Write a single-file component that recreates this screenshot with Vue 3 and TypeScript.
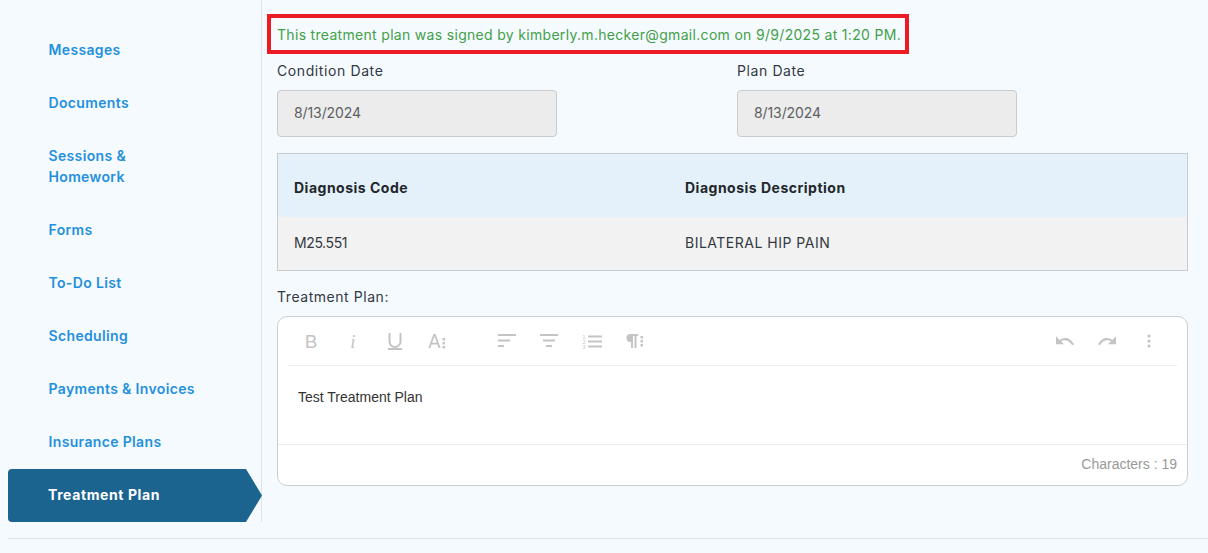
<script setup lang="ts">
const navItems: string[] = ['Messages', 'Documents', 'Sessions & Homework', 'Forms', 'To-Do List', 'Scheduling', 'Payments & Invoices', 'Insurance Plans'];
</script>

<template>
  <div class="page">
    <div class="main">
      <nav class="sidebar">
        <a v-for="item in navItems" :key="item" class="nav-item">{{ item }}</a>
        <a class="nav-item active">Treatment Plan</a>
      </nav>
      <section class="content">
        <div class="signed"><span>This treatment plan was signed by kimberly.m.hecker@gmail.com on 9/9/2025 at 1:20 PM.</span></div>
        <div class="dates">
          <div class="field">
            <label>Condition Date</label>
            <div class="date-input">8/13/2024</div>
          </div>
          <div class="field">
            <label>Plan Date</label>
            <div class="date-input">8/13/2024</div>
          </div>
        </div>
        <div class="table">
          <div class="row head">
            <div class="c1">Diagnosis Code</div>
            <div class="c2">Diagnosis Description</div>
          </div>
          <div class="row body">
            <div class="c1">M25.551</div>
            <div class="c2">BILATERAL HIP PAIN</div>
          </div>
        </div>
        <div class="plan-label">Treatment Plan:</div>
        <div class="editor">
          <div class="toolbar">
            <div class="tools">
              <span class="glyph b">B</span>
              <span class="glyph i">i</span>
              <svg width="18" height="20" viewBox="0 0 18 20"><path d="M3.5 2v8.5a5.5 5.5 0 0 0 11 0V2" fill="none" stroke="#c4c4c4" stroke-width="2"/><rect x="2" y="17" width="14" height="2" fill="#c4c4c4"/></svg>
              <svg width="18" height="18" viewBox="0 0 18 18" fill="#c4c4c4"><path d="M5.400 2h2.200l5 14h-2l-1.200-3.500H3.600L2.400 16H.4zM4.200 10.700h4.600L6.500 4.200z"/><rect x="14.500" y="6" width="2.500" height="2.500"/><rect x="14.500" y="10" width="2.500" height="2.500"/><rect x="14.500" y="14" width="2.500" height="2.500"/></svg>
            </div>
            <div class="tools second">
              <svg width="18" height="14" viewBox="0 0 18 14" fill="#c4c4c4"><rect width="18" height="2"/><rect y="5.500" width="12" height="2"/><rect y="11" width="6" height="2"/></svg>
              <svg width="18" height="14" viewBox="0 0 18 14" fill="#c4c4c4"><rect width="18" height="2"/><rect x="3" y="5.500" width="12" height="2"/><rect x="6" y="11" width="6" height="2"/></svg>
              <svg width="20" height="15" viewBox="0 0 20 15" fill="#c4c4c4"><rect x="6" y="1.500" width="14" height="2"/><rect x="6" y="6.500" width="14" height="2"/><rect x="6" y="11.500" width="14" height="2"/><text x="0.500" y="4.500" font-size="5.500" font-family="Liberation Sans">1</text><text x="0.500" y="9.500" font-size="5.500" font-family="Liberation Sans">2</text><text x="0.500" y="14.500" font-size="5.500" font-family="Liberation Sans">3</text></svg>
              <svg width="18" height="14" viewBox="0 0 18 14" fill="#c4c4c4"><path d="M4 0h8v2h-1.500v12h-2V2H7v12H5V8A4 4 0 0 1 4 0z"/><rect x="14.500" y="2" width="2.500" height="2.500"/><rect x="14.500" y="6" width="2.500" height="2.500"/><rect x="14.500" y="10" width="2.500" height="2.500"/></svg>
            </div>
            <div class="tools end">
              <svg width="18" height="10" viewBox="0 0 19 10" fill="#c4c4c4"><path d="M0 0v8.500h8.500L5.300 5.300C7.800 3.500 13 3 17.200 9.500l1.800-1C14.500.5 8 .5 3.900 3.900z"/></svg>
              <svg width="18" height="10" viewBox="0 0 19 10" fill="#c4c4c4"><path d="M19 0v8.500h-8.500l3.200-3.200C11.200 3.500 6 3 1.800 9.500L0 8.500C4.500.5 11 .5 15.100 3.900z"/></svg>
              <svg class="dots" width="4" height="14" viewBox="0 0 4 14" fill="#c4c4c4"><circle cx="2" cy="2" r="1.600"/><circle cx="2" cy="7" r="1.600"/><circle cx="2" cy="12" r="1.600"/></svg>
            </div>
          </div>
          <div class="editor-body">Test Treatment Plan</div>
          <div class="editor-foot">Characters : 19</div>
        </div>
      </section>
    </div>
    <hr class="rule" />
  </div>
</template>

<style scoped>
.page { width: 1208px; height: 553px; background: #f5faff; font-family: Inter, "Open Sans", sans-serif; overflow: hidden; box-sizing: border-box; padding: 0 0 0 8px; }
.main { display: flex; height: 522px; }
.sidebar { width: 254px; box-sizing: border-box; border-right: 1px solid #dfe3e8; padding-top: 24px; display: flex; flex-direction: column; flex-shrink: 0; }
.nav-item { display: flex; align-items: center; min-height: 53px; padding: 0 20px 2px 40.500px; box-sizing: border-box; font-size: 14px; font-weight: 600; line-height: 21px; letter-spacing: .35px; color: #2490dc; }
.nav-item:nth-child(3) { min-height: 74px; padding-right: 110px; }
.nav-item.active { width: 254px; height: 53px; padding-left: 40px; color: #fff; background: #1b6490; font-weight: 700; letter-spacing: .6px; border-radius: 4px 0 0 4px; clip-path: polygon(0 0, 238px 0, 254px 50%, 238px 100%, 0 100%); }
.content { flex: 1; padding: 14px 20px 0 15px; min-width: 0; }
.signed { width: 642px; height: 40px; margin-left: -10px; box-sizing: border-box; border: 4px solid #ed1c24; display: flex; align-items: center; padding-left: 6px; font-size: 14px; letter-spacing: .31px; color: #43a047; white-space: nowrap; }
.dates { display: flex; gap: 180px; margin-top: 7px; }
.field { width: 280px; }
.field label { display: block; font-size: 14px; letter-spacing: .6px; line-height: 20px; color: #33393f; }
.date-input { margin-top: 9px; height: 47px; box-sizing: border-box; border: 1px solid #c9cbcd; border-radius: 4px; background: #ececec; display: flex; align-items: center; padding: 0 0 3px 16px; font-size: 14px; letter-spacing: -.1px; color: #5b5f63; }
.table { margin-top: 16px; border: 1px solid #c8cbce; width: 911px; box-sizing: border-box; font-size: 14px; letter-spacing: .5px; }
.row { display: flex; align-items: center; }
.row .c1 { width: 407px; padding-left: 16px; box-sizing: border-box; }
.head { height: 63px; padding-top: 3px; box-sizing: border-box; background: #e4f1fa; font-weight: 700; color: #23272b; }
.body { height: 53px; padding-bottom: 2px; box-sizing: border-box; background: #f2f2f2; color: #33393f; }
.body .c1 { letter-spacing: -.4px; }
.plan-label { margin-top: 16px; font-size: 14px; letter-spacing: .55px; line-height: 20px; color: #33393f; }
.editor { margin-top: 9px; width: 911px; height: 170px; box-sizing: border-box; border: 1px solid #c9ced3; border-radius: 10px; background: #fff; display: flex; flex-direction: column; font-family: "Liberation Sans", Arial, sans-serif; }
.toolbar { height: 48px; margin: 0 10px; border-bottom: 1px solid #ececec; display: flex; align-items: center; padding: 0 14px; flex-shrink: 0; }
.tools { display: flex; align-items: center; gap: 24px; }
.tools.second { margin-left: 52px; }
.tools.end { margin-left: auto; padding-right: 12px; }
.dots { margin-left: 7px; }
.glyph { color: #c4c4c4; font-size: 19px; line-height: 1; width: 18px; text-align: center; }
.glyph.i { font-style: italic; font-family: "Liberation Serif", serif; }
.editor-body { flex: 1; padding: 23px 20px 0; font-size: 14px; line-height: 16px; color: #333; }
.editor-foot { height: 41px; border-top: 1px solid #ececec; display: flex; align-items: center; justify-content: flex-end; padding: 0 10px 3px 0; box-sizing: border-box; font-size: 14px; color: #999; flex-shrink: 0; }
.rule { margin: 16px 0 0; border: 0; border-top: 1px solid #e0e4e8; }
</style>
